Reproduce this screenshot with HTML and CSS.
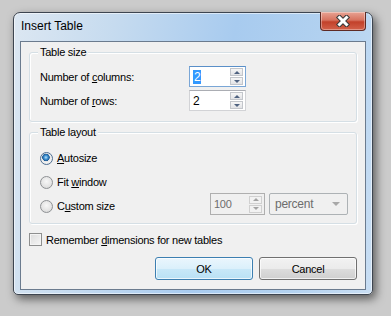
FILE: index.html
```html
<!DOCTYPE html>
<html>
<head>
<meta charset="utf-8">
<link rel="stylesheet" href="styles.css">
</head>
<body>
<div class="window">
  <div class="titlebar">
    <span class="title">Insert Table</span>
    <div class="close">
      <svg width="16" height="12" viewBox="0 0 16 12">
        <path d="M4.5 2.5 L11.5 9.5 M11.5 2.5 L4.5 9.5" stroke="#3b3b3b" stroke-width="5" stroke-linecap="square" fill="none"/>
        <path d="M4.5 2.5 L11.5 9.5 M11.5 2.5 L4.5 9.5" stroke="#ffffff" stroke-width="3" stroke-linecap="square" fill="none"/>
      </svg>
    </div>
  </div>
  <div class="client">
    <div class="group size">
      <span class="legend">Table size</span>
      <div class="grid">
        <span class="lbl">Number of <u>c</u>olumns:</span>
        <div class="spin focus"><span class="val"><span class="sel">2</span></span><div class="arrows"><span class="arr up"></span><span class="arr down"></span></div></div>
        <span class="lbl">Number of <u>r</u>ows:</span>
        <div class="spin"><span class="val">2</span><div class="arrows"><span class="arr up"></span><span class="arr down"></span></div></div>
      </div>
    </div>
    <div class="group layout">
      <span class="legend">Table layout</span>
      <div class="row r1"><span class="radio on"></span><span><u>A</u>utosize</span></div>
      <div class="row r2"><span class="radio"></span><span>Fit <u>w</u>indow</span></div>
      <div class="row r3">
        <div class="opt"><span class="radio"></span><span>C<u>u</u>stom size</span></div>
        <div class="custom">
          <div class="spin dis"><span class="val">100</span><div class="arrows"><span class="arr up"></span><span class="arr down"></span></div></div>
          <div class="combo"><span>percent</span><span class="caret"></span></div>
        </div>
      </div>
    </div>
    <div class="check"><span class="box"></span><span>Remember <u>d</u>imensions for new tables</span></div>
    <div class="buttons">
      <div class="btn ok">OK</div>
      <div class="btn">Cancel</div>
    </div>
  </div>
</div>
</body>
</html>
```
FILE: styles.css
```css
html, body {
  margin: 0;
  padding: 0;
}
body {
  background: #cbcbcb;
  padding: 12px 0 0 13px;
  width: 391px;
  height: 316px;
  box-sizing: border-box;
  font-family: "Liberation Sans", Arial, sans-serif;
  font-size: 11px;
  letter-spacing: -0.25px;
  color: #000;
  overflow: hidden;
}
.window {
  width: 360px;
  height: 283px;
  box-sizing: border-box;
  border: 1px solid #3d4550;
  border-radius: 7px 7px 5px 5px;
  background: linear-gradient(100deg, #dce7f2 0%, #c6dbef 25%, #a8cbef 55%, #b3d2f0 80%, #c9def3 100%);
  box-shadow: 3px 4px 10px rgba(0,0,0,0.55), inset 0 0 0 1px rgba(255,255,255,0.55);
  display: flex;
  flex-direction: column;
}
.titlebar {
  height: 28px;
  display: flex;
  justify-content: space-between;
  align-items: flex-start;
  padding-left: 7px;
  padding-right: 6px;
}
.title {
  font-size: 12px;
  line-height: 15px;
  margin-top: 6px;
  letter-spacing: 0;
  color: #000;
}
.close {
  width: 46px;
  height: 19px;
  margin-top: -1px;
  box-sizing: border-box;
  border: 1px solid #5e2a24;
  border-top: none;
  border-radius: 0 0 4px 4px;
  background: linear-gradient(#e8a394 0%, #d7735f 45%, #c2412a 55%, #d3614a 100%);
  display: flex;
  align-items: center;
  justify-content: center;
  box-shadow: inset 0 0 0 1px rgba(255,255,255,0.35);
}
.client {
  flex: 1;
  margin: 0 6px 4px 6px;
  border: 1px solid #6b7b8e;
  background: #f0f0f0;
  display: flex;
  flex-direction: column;
}
.group {
  position: relative;
  margin: 0 8px;
  border: 1px solid #d5dfe5;
  border-radius: 3px;
  padding-left: 10px;
  padding-right: 8px;
  box-shadow: inset 1px 1px 0 #fff, 1px 1px 0 #fff;
}
.size {
  margin-top: 10px;
  padding-top: 13px;
  padding-bottom: 10px;
}
.layout {
  margin-top: 10px;
  padding-top: 17px;
  padding-bottom: 8px;
}
.legend {
  position: absolute;
  top: -7px;
  left: 8px;
  padding: 0 2px;
  line-height: 13px;
  background: #f0f0f0;
}
.grid {
  display: grid;
  grid-template-columns: 149px 57px;
  grid-auto-rows: 21px;
  row-gap: 3px;
  align-items: center;
}
.spin {
  height: 21px;
  box-sizing: border-box;
  border: 1px solid #d2d3d6;
  border-top-color: #abadb3;
  background: #fff;
  display: flex;
  align-items: center;
  justify-content: space-between;
  padding: 0 2px 0 2px;
}
.spin.focus {
  border-color: #7aa6d6;
  border-top-color: #5a8fc8;
}
.val {
  padding-left: 1px;
  font-size: 12px;
  line-height: 14px;
}
.sel {
  background: #3399ff;
  color: #fff;
  padding: 0 1px;
}
.arrows {
  display: flex;
  flex-direction: column;
  gap: 1px;
}
.arr {
  width: 13px;
  height: 8px;
  box-sizing: border-box;
  border: 1px solid #c3c6cb;
  background: linear-gradient(#f6f6f6, #e2e3e6);
  display: flex;
  align-items: center;
  justify-content: center;
}
.arr::before {
  content: "";
  width: 0;
  height: 0;
  border-left: 3px solid transparent;
  border-right: 3px solid transparent;
}
.up::before {
  border-bottom: 3px solid #4f6280;
}
.down::before {
  border-top: 3px solid #4f6280;
}
.spin.dis {
  width: 55px;
  height: 22px;
  background: #f0f0f0;
  border-color: #afafaf;
  color: #6d6d6d;
}
.spin.dis .val {
  font-size: 11px;
}
.spin.dis .arr {
  border-color: #d0d0d0;
  background: #f2f2f2;
}
.spin.dis .up::before {
  border-bottom-color: #a3a3a3;
}
.spin.dis .down::before {
  border-top-color: #a3a3a3;
}
.row {
  display: flex;
  align-items: center;
  gap: 4px;
}
.r1, .r2 {
  height: 16px;
}
.r2 {
  margin-top: 8px;
}
.r3 {
  height: 22px;
  margin-top: 3px;
  justify-content: space-between;
}
.opt {
  display: flex;
  align-items: center;
  gap: 4px;
  margin-top: 4px;
}
.radio {
  width: 13px;
  height: 13px;
  box-sizing: border-box;
  border-radius: 50%;
  border: 1px solid #8e9194;
  background: radial-gradient(circle at 50% 40%, #f7f7f7 0%, #e3e3e3 60%, #cfcfcf 100%);
  flex: none;
}
.radio.on {
  border-color: #4e6f93;
  background: radial-gradient(circle at 45% 40%, #b8e3fb 0px, #3c8fd0 2px, #1d5a95 3.5px, #e6e6e6 4px, #f2f2f2 60%, #d9d9d9 100%);
}
.custom {
  display: flex;
  gap: 4px;
}
.combo {
  width: 79px;
  height: 22px;
  box-sizing: border-box;
  border: 1px solid #adb2b5;
  border-radius: 2px;
  background: #f0f0f0;
  color: #6d6d6d;
  display: flex;
  align-items: center;
  justify-content: space-between;
  padding: 0 7px 0 5px;
  font-size: 12px;
}
.caret {
  width: 0;
  height: 0;
  border-left: 4px solid transparent;
  border-right: 4px solid transparent;
  border-top: 4px solid #a8a8a8;
}
.check {
  margin: 9px 0 0 8px;
  height: 13px;
  display: flex;
  align-items: center;
  gap: 4px;
}
.box {
  width: 13px;
  height: 13px;
  box-sizing: border-box;
  border: 1px solid #8e8f8f;
  background: linear-gradient(135deg, #dcdcdc, #f6f6f6);
  box-shadow: inset 0 0 0 1px #f4f4f4;
  flex: none;
}
.buttons {
  margin: 11px 8px 0 0;
  display: flex;
  justify-content: flex-end;
  gap: 6px;
}
.btn {
  width: 98px;
  height: 23px;
  box-sizing: border-box;
  border: 1px solid #707070;
  border-radius: 3px;
  background: linear-gradient(#f2f2f2 0%, #ebebeb 50%, #dddddd 51%, #cfcfcf 100%);
  box-shadow: inset 0 0 0 1px rgba(255,255,255,0.7);
  display: flex;
  align-items: center;
  justify-content: center;
  font-size: 11px;
}
.btn.ok {
  border-color: #3c7fb1;
  background: linear-gradient(#eaf6fd 0%, #dbf0fb 50%, #c8e8f8 51%, #b9e1f5 100%);
}
```
